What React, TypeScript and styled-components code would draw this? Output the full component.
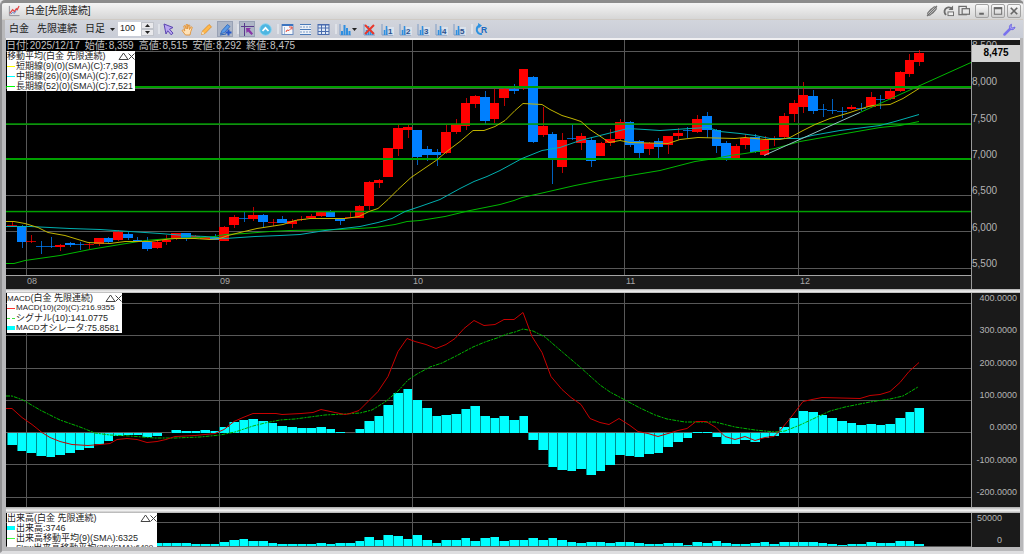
import React from "react";
import styled, { createGlobalStyle, css } from "styled-components";

const GlobalStyle = createGlobalStyle`
  *, *::before, *::after { box-sizing: border-box; }
  body {
    margin: 0;
    background: #e4e4e6;
    font-family: "Liberation Sans", "Noto Sans CJK JP", sans-serif;
    font-size: 10px;
    color: #1c1c1c;
  }
  button, input { font: inherit; color: inherit; }
`;

/* ---------- window frame ---------- */

const Window = styled.div`
  display: flex;
  flex-direction: column;
  min-height: 100vh;
  border-top: 3px solid #8c8c8c;
  border-left: 2px solid #929294;
  border-right: 1px solid #d8d8da;
  border-bottom: 3px solid #dedee0;
  border-radius: 5px 5px 3px 3px;
  background: #b8b8ba;
  overflow: hidden;
`;

const TitleBar = styled.header`
  display: flex;
  align-items: center;
  height: 17px;
  padding: 0 2px 0 6px;
  background: linear-gradient(#f4f4f4, #d6d6d6);
  border-bottom: 1px solid #cfcac4;
`;

const Title = styled.h1`
  flex: 1;
  margin: 0 0 0 5px;
  font-size: 10px;
  font-weight: 400;
  line-height: 16px;
`;

const TitleTools = styled.div`
  display: flex;
  align-items: center;
  gap: 4px;
  margin-right: 5px;
`;

const WindowButtons = styled.div`
  display: flex;
  gap: 2px;
`;

const PlainButton = styled.button`
  display: flex;
  align-items: center;
  justify-content: center;
  padding: 0;
  border: 0;
  background: none;
`;

const TitleTool = styled(PlainButton)`
  width: 12px;
  height: 14px;
`;

const FrameButton = styled(PlainButton)`
  width: 14px;
  height: 14px;
  border: 1px solid #a2a2a2;
  border-radius: 2px;
  background: linear-gradient(#fafafa, #cdcdcd);
`;

const ToolBar = styled.div`
  display: flex;
  align-items: center;
  height: 18px;
  margin-left: 3px;
  padding: 0 7px 0 4px;
  background: linear-gradient(#d2d5dc, #c8ccd6);
`;

const Names = styled.div`
  display: flex;
  align-items: center;
  gap: 8px;
`;

const NameButton = styled(PlainButton)`
  line-height: 14px;
  gap: 5px;
`;

const CountField = styled.div`
  display: flex;
  margin-left: 3px;
`;

const CountInput = styled.input`
  width: 23px;
  height: 14px;
  padding: 0 0 2px 2px;
  border: 0;
  background: #fff;
  font-size: 9px;
  line-height: 12px;
`;

const Spinner = styled.div`
  display: flex;
  flex-direction: column;
  width: 13px;
`;

const SpinButton = styled(PlainButton)`
  height: 7px;
  background: #e9e9ec;
  border: 1px solid #c0c3ca;
`;

const ToolGroup = styled.div<{ $gap?: number }>`
  display: flex;
  align-items: center;
  gap: ${(p) => p.$gap ?? 3}px;
  margin-left: 4px;
  &::before {
    content: "";
    width: 2px;
    height: 10px;
    margin-right: ${(p) => -1 * (p.$gap ?? 3)}px;
    background: #dfe2e8;
  }
`;

const Tool = styled(PlainButton)<{ $active?: boolean; $wide?: boolean }>`
  width: ${(p) => (p.$wide ? 22 : 16)}px;
  height: 16px;
  ${(p) =>
    p.$active &&
    css`
      background: #aeb6c6;
      box-shadow: inset 0 0 0 1px #98a1b4;
    `}
`;

const WrenchButton = styled(PlainButton)`
  margin-left: auto;
`;

/* ---------- chart panels ---------- */

const Charts = styled.main`
  flex: 1;
  display: flex;
  flex-direction: column;
  margin: 0 3px 4px 4px;
  border-top: 2px solid #f0f0f2;
`;

const Divider = styled.div<{ $size: number }>`
  height: ${(p) => p.$size}px;
  background: linear-gradient(#a8a8a8, #f4f4f4 55%, #b0b0b0);
`;

const Panel = styled.section<{ $height: number }>`
  display: grid;
  grid-template-columns: 1fr 49px;
  height: ${(p) => p.$height}px;
  background: #1a1a1a;
`;

const PlotColumn = styled.div`
  display: flex;
  flex-direction: column;
  min-width: 0;
  height: 100%;
  overflow: hidden;
`;

const Plot = styled.div`
  position: relative;
  flex: 1;
  min-height: 0;
  overflow: hidden;
  background: #000;
`;

const Drawing = styled.svg`
  display: block;
  width: 100%;
  height: 100%;
`;

const Tick = styled.span`
  font-size: 9px;
  line-height: 11px;
`;

const Scale = styled.div<{ $align: "left" | "right"; $inset?: number; $bottom: number }>`
  position: relative;
  display: flex;
  flex-direction: column;
  justify-content: space-between;
  padding: 0 ${(p) => p.$inset ?? 0}px ${(p) => p.$bottom}px 0;
  border-left: 1px solid #9a9a9a;
  overflow: hidden;
  color: #b4b4b4;
  text-align: ${(p) => p.$align};
  ${Tick} {
    font-size: ${(p) => (p.$align === "left" ? 10 : 9)}px;
  }
`;

const LastPrice = styled.div`
  position: absolute;
  top: 5px;
  left: 0;
  right: 0;
  height: 17px;
  background: #d3d3d3;
  color: #000;
  font-size: 10px;
  font-weight: 700;
  line-height: 15px;
  text-align: center;
`;

const Months = styled.div`
  display: grid;
  grid-template-columns: 21fr 193fr 193fr 213fr 174fr 171fr;
  height: 14px;
  border-top: 1px solid #a4a4a4;
  color: #a8a8a8;
`;

const Quote = styled.dl`
  position: absolute;
  top: 0;
  left: 0;
  display: flex;
  gap: 5px;
  margin: 0;
  color: #c4c4c4;
  font-size: 10px;
  line-height: 12px;
  white-space: nowrap;
`;

const QuoteItem = styled.div`
  display: flex;
  gap: 1px;
  dt, dd { margin: 0; }
`;

const Legend = styled.div<{ $width: number; $top: number }>`
  position: absolute;
  top: ${(p) => p.$top}px;
  left: 1px;
  width: ${(p) => p.$width}px;
  background: #fff;
  color: #1e1e1e;
  font-size: 9px;
  line-height: 10px;
  white-space: nowrap;
  overflow: hidden;
`;

const LegendRow = styled.div`
  display: flex;
  align-items: center;
  height: 10px;
`;

const LegendTitle = styled.span`
  flex: 1;
`;

const Swatch = styled.i<{ $color: string; $kind: "line" | "dash" | "block" }>`
  flex: none;
  width: 8px;
  margin-right: 1px;
  height: ${(p) => (p.$kind === "block" ? 4 : 1)}px;
  background: ${(p) =>
    p.$kind === "dash"
      ? `repeating-linear-gradient(90deg, ${p.$color} 0 3px, transparent 3px 5px)`
      : p.$color};
`;

const Half = styled.span`
  font-size: 8px;
`;

/* ---------- data ---------- */

const STEP = 9.649;
const barX = (i: number) => 12 + i * STEP;

type Candle = [up: 0 | 1, top: number, bottom: number, high: number, low: number];

const candles: Candle[] = [
  [1, 225, 226, 221, 226], [0, 226, 242, 225, 248], [1, 241, 242, 235, 243], [0, 246, 247, 241, 254],
  [0, 246, 247, 237, 248], [1, 245, 247, 244, 251], [0, 243, 245, 242, 247], [0, 244, 245, 242, 250],
  [1, 244, 245, 242, 249], [1, 238, 244, 238, 246], [0, 238, 242, 237, 243], [1, 232, 240, 230, 241],
  [0, 234, 238, 232, 240], [0, 240, 242, 237, 242], [0, 242, 249, 237, 251], [1, 242, 248, 241, 249],
  [1, 240, 242, 235, 245], [1, 233, 238, 233, 240], [0, 233, 239, 233, 241], [1, 236, 238, 235, 239],
  [1, 237, 239, 236, 239], [0, 237, 240, 234, 240], [1, 227, 241, 226, 241], [1, 217, 225, 215, 228],
  [0, 218, 219, 212, 222], [1, 215, 219, 207, 221], [0, 215, 222, 214, 227], [1, 222, 223, 219, 226],
  [0, 219, 223, 216, 223], [1, 221, 224, 219, 228], [1, 219, 220, 216, 221], [1, 216, 218, 214, 219],
  [1, 212, 216, 211, 217], [0, 212, 217, 210, 217], [0, 218, 221, 218, 225], [1, 217, 218, 212, 218],
  [1, 206, 218, 205, 218], [1, 182, 206, 181, 210], [1, 180, 183, 179, 188], [1, 148, 177, 148, 177],
  [1, 128, 149, 124, 156], [1, 127, 130, 125, 138], [0, 130, 157, 130, 165], [0, 149, 155, 146, 161],
  [0, 152, 155, 149, 166], [1, 132, 153, 124, 154], [1, 124, 132, 119, 134], [1, 103, 126, 98, 130],
  [1, 96, 104, 95, 108], [0, 97, 121, 91, 125], [1, 103, 119, 89, 123], [1, 89, 98, 88, 106],
  [0, 89, 91, 84, 94], [1, 69, 87, 69, 90], [0, 77, 142, 76, 143], [1, 126, 135, 107, 137],
  [0, 134, 159, 132, 184], [1, 140, 167, 133, 173], [0, 138, 139, 124, 140], [1, 136, 143, 133, 150],
  [0, 140, 161, 137, 167], [1, 143, 156, 142, 156], [1, 139, 143, 129, 146], [1, 122, 139, 119, 140],
  [0, 122, 145, 121, 147], [0, 141, 153, 140, 160], [1, 143, 149, 142, 155], [0, 141, 147, 138, 160],
  [1, 136, 145, 136, 154], [1, 133, 136, 128, 140], [0, 130, 131, 127, 138], [1, 119, 132, 115, 133],
  [0, 116, 130, 112, 138], [0, 130, 146, 129, 153], [0, 143, 159, 141, 161], [1, 146, 159, 144, 159],
  [1, 138, 145, 134, 149], [0, 137, 152, 134, 153], [1, 140, 155, 136, 156], [1, 138, 140, 136, 146],
  [1, 116, 137, 113, 138], [1, 103, 114, 100, 122], [1, 95, 107, 82, 113], [0, 96, 111, 90, 114],
  [0, 109, 110, 104, 117], [0, 110, 111, 99, 114], [0, 111, 112, 107, 118], [1, 107, 109, 105, 110],
  [0, 108, 109, 103, 111], [1, 97, 107, 92, 108], [0, 99, 100, 95, 109], [1, 91, 99, 88, 100],
  [1, 72, 91, 71, 92], [1, 60, 74, 54, 77], [1, 53, 62, 50, 66],
];

const oscillator = [
  445, 451, 453, 456, 457, 455, 453, 450, 448, 444, 441, 436, 435, 435, 437, 436, 433, 430, 431, 431,
  430, 431, 427, 422, 420, 419, 421, 423, 426, 427, 428, 428, 427, 429, 432, 433, 429, 421, 416, 405,
  393, 389, 400, 408, 416, 415, 414, 409, 406, 416, 418, 416, 420, 416, 440, 450, 467, 470, 471, 469,
  475, 471, 465, 455, 456, 457, 454, 453, 447, 442, 438, 432, 432, 437, 444, 444, 440, 442, 438, 436,
  427, 418, 411, 412, 415, 418, 421, 423, 425, 424, 425, 424, 418, 412, 408,
];

const volume = [
  3, 3, 4, 3, 4, 3, 3, 4, 3, 3, 3, 4, 3, 3, 4, 3, 3, 3, 3, 2, 2, 2, 4, 6, 7, 5, 5, 3, 2, 2, 2, 2, 3, 2, 3, 3,
  5, 9, 6, 11, 10, 7, 11, 6, 3, 6, 6, 8, 5, 8, 9, 5, 6, 6, 8, 6, 8, 6, 4, 3, 4, 4, 3, 4, 4, 3, 2, 2, 3, 3,
  1, 4, 3, 5, 3, 2, 2, 3, 4, 2, 4, 4, 4, 4, 3, 2, 1, 2, 2, 4, 3, 3, 5, 5, 2,
];

const shortAverage =
  "6,221 14,221 25,223 38,227 48,232 65,235 88,242 110,243 125,241 150,241 165,239 175,238 195,238 210,239 220,238 228,235 240,232 257,228 270,226 283,224 295,220 310,218 325,218 345,218 359,216 369,211 378,208 388,199 398,189 411,177 436,160 448,150 460,141 473,130 484,130 495,126 505,120 515,110 523,103 542,104 550,109 562,115 572,118 581,121 590,129 602,137 609,142 620,140 630,142 668,143 680,139 698,137 735,138 745,137 765,139 780,139 790,137 803,130 815,124 830,118 850,112 865,107 872,105 890,104 903,98 919,88";
const middleAverage =
  "6,226 30,226 70,228 100,229 130,231 160,233 185,235 205,236 225,238 255,236 280,235 300,234 325,230 360,226 378,222 392,218 405,211 420,206 440,199 460,188 474,181 487,176 500,170 522,158 542,150 560,147 580,140 600,135 628,128 645,129 660,130 690,128 708,127 720,131 740,133 755,135 770,138 800,138 812,135 840,130 880,125 895,121 919,114";
const longAverage =
  "6,263 14,263 25,260 60,255 90,249 120,244 145,240 170,238 200,237 215,236 225,234 245,233 270,231 290,230 340,229 375,227 395,224 407,221 420,220 445,216 470,210 485,207 500,204 514,200 522,197 540,193 575,185 600,180 630,175 660,170 695,161 715,158 730,155 745,153 775,148 800,141 840,134 880,127 900,125 919,121";
const macdLine =
  "6,408 12,408 22,417 32,424 42,432 50,437 60,441 72,444 88,445 100,444 110,443 117,439 127,438 137,439 147,442 157,441 166,439 175,436 195,435 215,433 224,429 234,421 243,417 253,413 276,413 282,414 301,413 313,412 321,409 335,412 345,414 350,413 359,410 369,400 378,391 388,376 398,351 407,338 415,341 426,344 436,348 446,344 455,338 464,328 474,320 484,325 495,324 504,319 514,319 523,312 532,336 542,352 551,376 562,389 571,397 581,404 590,418 600,422 609,424 619,418 630,425 638,431 648,433 658,436 668,433 678,430 687,428 696,421 706,421 716,427 725,436 735,439 745,436 755,440 765,437 774,436 780,430 790,418 803,401 812,399 822,397 860,398 870,395 880,394 890,391 900,382 909,371 919,362";
const signalLine =
  "6,396 12,396 23,400 40,410 60,420 80,427 95,433 110,435 130,436 155,438 175,438 200,437 220,435 235,432 253,426 265,423 280,420 295,419 310,417 325,415 345,414 360,413 372,410 385,402 398,391 408,380 417,374 430,367 442,363 456,356 473,347 485,342 497,338 507,334 515,332 523,329 533,331 545,337 560,350 580,367 600,385 610,392 625,400 640,408 655,415 667,419 685,422 715,422 735,427 755,430 775,432 785,431 800,425 815,418 830,411 845,407 870,402 890,399 903,396 918,387";

const monthLines = [26, 219, 412, 624, 798];

/* ---------- chart drawings ---------- */

const GridLines = ({ rows, top, bottom }: { rows: number[]; top: number; bottom: number }) => (
  <g fill="#585858" shapeRendering="crispEdges">
    {rows.map((y) => (
      <rect key={y} x="6" width="965" y={y} height="1" />
    ))}
    {monthLines.map((x) => (
      <rect key={x} x={x} width="1" y={top} height={bottom - top} />
    ))}
  </g>
);

const PriceDrawing = () => (
  <Drawing viewBox="6 40 965 235" preserveAspectRatio="none" role="img" aria-label="白金 日足">
    <GridLines rows={[51, 88, 124, 159, 195, 231, 268]} top={40} bottom={275} />
    <g shapeRendering="crispEdges">
      {candles.map(([up, top, bottom, high, low], i) => {
        const x = Math.round(barX(i));
        const left = Math.round(barX(i) - STEP / 2);
        const right = Math.round(barX(i) + STEP / 2);
        return (
          <g key={i} fill={up ? "#ff0000" : "#0080ff"}>
            <rect x={x} y={high} width="1" height={low - high} opacity="0.75" />
            <rect x={left} y={top} width={right - left} height={bottom - top} opacity={bottom - top === 1 ? 0.75 : 1} />
          </g>
        );
      })}
    </g>
    <g fill="#00a000">
      <rect x="6" y="86" width="965" height="2" />
      <rect x="6" y="123.300" width="965" height="1.500" />
      <rect x="6" y="158" width="965" height="2" />
      <rect x="6" y="210.800" width="965" height="1.500" />
    </g>
    <g fill="none" transform="translate(0 .5)">
      <polyline points={longAverage} stroke="#00b800" />
      <polyline points={middleAverage} stroke="#00b0b0" />
      <polyline points={shortAverage} stroke="#c0b400" />
      <line x1="764" y1="155" x2="860" y2="112" stroke="#8fc4c4" />
      <line x1="860" y1="112" x2="971" y2="62" stroke="#00b800" />
    </g>
  </Drawing>
);

const MacdDrawing = () => (
  <Drawing viewBox="6 293 965 214" preserveAspectRatio="none" role="img" aria-label="MACD">
    <GridLines rows={[303, 335, 368, 400, 432, 464, 497]} top={293} bottom={507} />
    <g shapeRendering="crispEdges">
      {oscillator.map((y, i) => {
        const left = Math.round(barX(i) - STEP / 2);
        const right = Math.round(barX(i) + STEP / 2);
        const top = Math.min(y, 433);
        const height = Math.abs(y - 433);
        return (
          <g key={i}>
            <rect x={left} y={top} width={right - left} height={height} fill="#008c8c" />
            <rect x={left + 1} y={top} width={right - left - 1} height={height} fill="#00ffff" />
          </g>
        );
      })}
    </g>
    <g fill="none">
      <polyline points={signalLine} stroke="#00b400" strokeDasharray="4 1 2 1" />
      <polyline points={macdLine} stroke="#c80000" transform="translate(0 .5)" />
    </g>
  </Drawing>
);

const VolumeDrawing = () => (
  <Drawing viewBox="6 513 965 34" preserveAspectRatio="none" role="img" aria-label="出来高">
    <GridLines rows={[522, 546]} top={513} bottom={547} />
    <g shapeRendering="crispEdges">
      {volume.map((v, i) => {
        const left = Math.round(barX(i) - STEP / 2);
        const right = Math.round(barX(i) + STEP / 2);
        return (
          <g key={i}>
            <rect x={left} y={546 - v} width={right - left} height={v} fill="#008c8c" />
            <rect x={left + 1} y={546 - v} width={right - left - 1} height={v} fill="#00ffff" />
          </g>
        );
      })}
    </g>
  </Drawing>
);

/* ---------- icons ---------- */

const Icon = ({ children, size = 13 }: { children: React.ReactNode; size?: number }) => (
  <svg width={size} height={size} viewBox="0 0 13 13" fill="none" aria-hidden="true">
    {children}
  </svg>
);

const DownArrow = () => (
  <svg width="5" height="3" viewBox="0 0 5 3" aria-hidden="true">
    <path d="M0 0h5L2.500 3z" fill="#222" />
  </svg>
);

const BarsIcon = ({ mark }: { mark?: string }) => (
  <Icon>
    <path d="M1 1v11h11" stroke="#7f9cc4" />
    <path
      d={mark ? "M3.500 12V7M5.500 12V3M7.500 12V6M9.500 12V9" : "M3 12V8M5.500 12V2M8 12V5M10.500 12V8"}
      stroke="#2f8fe0"
      strokeWidth={mark ? 1.5 : 2}
    />
    {mark && mark !== "x" && (
      <>
        <rect x="7" y="4" width="6" height="8" fill="#dfe6f0" opacity="0.8" />
        <text x="7" y="11" fontSize="8" fontWeight="700" fill="#2a4f8c">
          {mark}
        </text>
      </>
    )}
    {mark === "x" && <path d="M2 2l9 9M11 2l-9 9" stroke="#e8382c" strokeWidth="2" />}
  </Icon>
);

const ChartIcon = () => (
  <Icon size={12}>
    <path d="M1.500 1v10.500h11" stroke="#8c8c94" />
    <path d="M2 9l3-4 2 2 2-3 1 1 2-4" stroke="#e04444" strokeWidth="1.300" />
    <path d="M3 10l2-2 2 1 2-3" stroke="#5a7ec8" />
  </Icon>
);

const CursorIcon = () => (
  <Icon>
    <path d="M2 1l9 3.500-3.500 1.700 3.500 4-1.800 1.600-3.500-4L4 11z" fill="#b9a6f0" stroke="#5a44b0" />
  </Icon>
);

const HandIcon = () => (
  <Icon>
    <path
      d="M4.500 12L1 7.500l1.200-.8L3.800 8 2.800 3l1.300-.4L5.200 6V1.500h1.400V6l1-4 1.300.3L8.500 6.500l1.600-2.700 1.200.6L9.800 8.500 9 12z"
      fill="#ffe2b8"
      stroke="#e09238"
      strokeWidth="0.900"
    />
  </Icon>
);

const PencilIcon = () => (
  <Icon>
    <path d="M1.500 11.500l1-3.500L9 1.500l2.500 2.300L5 10.500z" fill="#ffb84a" stroke="#d98a2a" strokeWidth="0.800" />
    <path d="M1.500 11.500l1-3 2 2z" fill="#f5e2c4" />
  </Icon>
);

const DrawIcon = () => (
  <Icon>
    <path d="M1.500 11L3 7.500 8.500 1.500 11 3.500 5.500 9.500z" fill="#5b9be8" stroke="#2b62b4" strokeWidth="0.800" />
    <path d="M1 12l6-1" stroke="#2b62b4" />
    <path d="M9.500 6.500v6M6.500 9.500h6" stroke="#2456c8" strokeWidth="2" />
  </Icon>
);

const CrossIcon = () => (
  <Icon>
    <path d="M3.500 0v13M0 3.500h13" stroke="#5a3a8c" />
    <path d="M5 5h5L8.500 6.500l3.500 4L10.500 12 7 8.500 5.500 10z" fill="#8a35a8" />
  </Icon>
);

const CircleUpIcon = () => (
  <Icon>
    <circle cx="6.500" cy="6.500" r="5.800" fill="#4db6e2" stroke="#8fd2ee" />
    <path d="M3.500 8l3-3.200 3 3.200" stroke="#fff" strokeWidth="1.700" />
  </Icon>
);

const PaneIcon = () => (
  <Icon>
    <rect x="1" y="1.500" width="11" height="10" fill="#f6f8fc" stroke="#6a8cc0" />
    <path d="M1 2h11" stroke="#3b74c0" strokeWidth="2" />
    <path d="M5 9l1-2 2 .500 3-3M8 4h3v2.500" stroke="#e44a3a" />
    <path d="M3.500 4v7" stroke="#a9bcd8" />
  </Icon>
);

const RowsIcon = () => (
  <Icon>
    <rect x="1" y="1" width="11" height="11" fill="#eaf0f8" />
    <path d="M1 1.500h11M1 6.500h11M1 11.500h11" stroke="#4a7ab8" />
    <path d="M1 4h11M1 9h11" stroke="#7d9cc8" strokeDasharray="2 1" />
  </Icon>
);

const GridIcon = () => (
  <Icon>
    <rect x="1" y="1.500" width="11" height="10" fill="#dfe9f6" stroke="#4a6cae" />
    <path d="M1 2h11M1 5h11M1 8.500h11M4.500 1v11M8.500 1v11" stroke="#4a6cae" />
  </Icon>
);

const RefreshIcon = () => (
  <Icon>
    <path d="M5 2.500C1.500 3 .8 7.500 3 9.800c1 1 2.500 1.400 4 .9" stroke="#2d92e0" strokeWidth="2" />
    <path d="M3 0l4 2.500L3.500 5.500z" fill="#2d92e0" />
    <text x="6" y="9.500" fontSize="8.500" fontWeight="700" fill="#1a68c0">
      R
    </text>
  </Icon>
);

const WrenchIcon = () => (
  <Icon>
    <path d="M1.500 11.500L7 6" stroke="#7a72ee" strokeWidth="2.500" strokeLinecap="round" />
    <path d="M8.500 1.200C6 2 5.800 5 7.500 6.200S11.800 6.500 12 4L9.800 5 8 3.800z" fill="#a49ef6" stroke="#6a62e0" strokeWidth="0.900" />
  </Icon>
);

const LinkIcon = () => (
  <Icon size={12}>
    <path d="M3 7.500l5-5c1.500-1.500 4 0 3 2L7 9M10 5.500l-5 5c-1.500 1.500-4 0-3-2L6 4M1 12L12 1" stroke="#6c6c6c" strokeWidth="1.100" />
  </Icon>
);

const ReloadIcon = () => (
  <Icon size={12}>
    <path d="M10 3.500A4.500 4.500 0 1 0 4.500 10.700" stroke="#6c6c6c" strokeWidth="2" />
    <path d="M12 .5v5H7z" fill="#6c6c6c" />
    <rect x="6.500" y="7.500" width="6" height="4" fill="#eee" stroke="#6c6c6c" />
  </Icon>
);

const CopyIcon = () => (
  <Icon size={12}>
    <rect x="1" y="1.500" width="8" height="9" stroke="#6c6c6c" strokeWidth="1.300" />
    <rect x="4.500" y="4" width="8" height="6" fill="#e6e6e6" stroke="#6c6c6c" strokeWidth="1.300" />
  </Icon>
);

const LegendMarks = () => (
  <svg width="17" height="9" viewBox="0 0 17 9" fill="none" stroke="#444" aria-hidden="true">
    <path d="M1 7.500h9L5.500 1zM10.500 1.500l6 6M16.500 1.500l-6 6" />
  </svg>
);

/* ---------- page ---------- */

const quotes = [
  ["日付:", "2025/12/17"],
  ["始値:", "8,359"],
  ["高値:", "8,515"],
  ["安値:", "8,292"],
  ["終値:", "8,475"],
];

export default function App() {
  return (
    <>
      <GlobalStyle />
      <Window>
        <TitleBar>
          <ChartIcon />
          <Title>白金[先限連続]</Title>
          <TitleTools>
            <TitleTool aria-label="リンク"><LinkIcon /></TitleTool>
            <TitleTool aria-label="更新"><ReloadIcon /></TitleTool>
            <TitleTool aria-label="複製"><CopyIcon /></TitleTool>
          </TitleTools>
          <WindowButtons>
            <FrameButton aria-label="最小化">
              <Icon size={12}><path d="M3.500 9.500h5" stroke="#666" strokeWidth="2" /></Icon>
            </FrameButton>
            <FrameButton aria-label="最大化">
              <Icon size={12}>
                <rect x="2.500" y="3" width="8" height="7" stroke="#666" />
                <path d="M2 3.500h9" stroke="#666" strokeWidth="2" />
              </Icon>
            </FrameButton>
            <FrameButton aria-label="閉じる">
              <Icon size={12}><path d="M3 3l7 7M10 3l-7 7" stroke="#666" strokeWidth="1.800" /></Icon>
            </FrameButton>
          </WindowButtons>
        </TitleBar>

        <ToolBar role="toolbar">
          <Names>
            <NameButton>白金</NameButton>
            <NameButton>先限連続</NameButton>
            <NameButton>日足 <DownArrow /></NameButton>
          </Names>
          <CountField>
            <CountInput aria-label="表示本数" defaultValue="100" />
            <Spinner>
              <SpinButton aria-label="増やす">
                <svg width="5" height="3" viewBox="0 0 5 3"><path d="M0 3h5L2.500 0z" fill="#222" /></svg>
              </SpinButton>
              <SpinButton aria-label="減らす"><DownArrow /></SpinButton>
            </Spinner>
          </CountField>
          <ToolGroup>
            <Tool aria-label="選択"><CursorIcon /></Tool>
            <Tool aria-label="移動"><HandIcon /></Tool>
            <Tool aria-label="描画"><PencilIcon /></Tool>
            <Tool aria-label="連続描画" $active><DrawIcon /></Tool>
          </ToolGroup>
          <ToolGroup $gap={2}>
            <Tool aria-label="十字線" $active><CrossIcon /></Tool>
            <Tool aria-label="上へ"><CircleUpIcon /></Tool>
          </ToolGroup>
          <ToolGroup $gap={2}>
            <Tool aria-label="チャート"><PaneIcon /></Tool>
            <Tool aria-label="横線"><RowsIcon /></Tool>
            <Tool aria-label="格子"><GridIcon /></Tool>
          </ToolGroup>
          <ToolGroup $gap={2}>
            <Tool aria-label="指標" $wide><BarsIcon /><DownArrow /></Tool>
            <Tool aria-label="指標を消す"><BarsIcon mark="x" /></Tool>
            {["1", "2", "3", "4", "5"].map((n) => (
              <Tool key={n} aria-label={`設定${n}`}><BarsIcon mark={n} /></Tool>
            ))}
          </ToolGroup>
          <ToolGroup>
            <Tool aria-label="リセット"><RefreshIcon /></Tool>
          </ToolGroup>
          <WrenchButton aria-label="設定"><WrenchIcon /></WrenchButton>
        </ToolBar>

        <Charts>
          <Panel $height={249}>
            <PlotColumn>
              <Plot>
                <PriceDrawing />
                <Quote>
                  {quotes.map(([name, value]) => (
                    <QuoteItem key={name}>
                      <dt>{name}</dt>
                      <dd>{value}</dd>
                    </QuoteItem>
                  ))}
                </Quote>
                <Legend $width={128} $top={11}>
                  <LegendRow>
                    <LegendTitle>移動平均(白金 先限連続)</LegendTitle>
                    <LegendMarks />
                  </LegendRow>
                  <LegendRow><Swatch $color="#ffff00" $kind="line" />短期線(9)(0)(SMA)(C):7,983</LegendRow>
                  <LegendRow><Swatch $color="#00ffff" $kind="line" />中期線(26)(0)(SMA)(C):7,627</LegendRow>
                  <LegendRow><Swatch $color="#00ff00" $kind="line" />長期線(52)(0)(SMA)(C):7,521</LegendRow>
                </Legend>
              </Plot>
              <Months>
                <span />
                {["08", "09", "10", "11", "12"].map((m) => (
                  <Tick key={m}>{m}</Tick>
                ))}
              </Months>
            </PlotColumn>
            <Scale $align="left" $bottom={20}>
              {["8,500", "8,000", "7,500", "7,000", "6,500", "6,000", "5,500"].map((t) => (
                <Tick key={t}>{t}</Tick>
              ))}
              <LastPrice>8,475</LastPrice>
            </Scale>
          </Panel>

          <Divider $size={4} />

          <Panel $height={214}>
            <PlotColumn>
              <Plot>
                <MacdDrawing />
                <Legend $width={115} $top={0}>
                  <LegendRow>
                    <LegendTitle><Half>MACD</Half>(白金 先限連続)</LegendTitle>
                    <LegendMarks />
                  </LegendRow>
                  <LegendRow><Swatch $color="#ff3030" $kind="line" /><Half>MACD(10)(20)(C):216.9355</Half></LegendRow>
                  <LegendRow><Swatch $color="#40e040" $kind="dash" />シグナル(10):141.0775</LegendRow>
                  <LegendRow><Swatch $color="#00ffff" $kind="block" /><Half>MACD</Half>オシレータ:75.8581</LegendRow>
                </Legend>
              </Plot>
            </PlotColumn>
            <Scale $align="right" $inset={3} $bottom={9}>
              {["400.0000", "300.0000", "200.0000", "100.0000", "0.0000", "-100.0000", "-200.0000"].map((t) => (
                <Tick key={t}>{t}</Tick>
              ))}
            </Scale>
          </Panel>

          <Divider $size={6} />

          <Panel $height={34}>
            <PlotColumn>
              <Plot>
                <VolumeDrawing />
                <Legend $width={150} $top={0}>
                  <LegendRow>
                    <LegendTitle>出来高(白金 先限連続)</LegendTitle>
                    <LegendMarks />
                  </LegendRow>
                  <LegendRow><Swatch $color="#00ffff" $kind="block" />出来高:3746</LegendRow>
                  <LegendRow><Swatch $color="#40ff40" $kind="line" />出来高移動平均(9)(SMA):6325</LegendRow>
                  <LegendRow>
                    <Swatch $color="#ff60ff" $kind="line" />
                    <Half>Slow</Half>出来高移動平均<Half>(26)(SMA):6409</Half>
                  </LegendRow>
                </Legend>
              </Plot>
            </PlotColumn>
            <Scale $align="right" $inset={18} $bottom={1}>
              <Tick>50000</Tick>
              <Tick>0</Tick>
            </Scale>
          </Panel>
        </Charts>
      </Window>
    </>
  );
}
